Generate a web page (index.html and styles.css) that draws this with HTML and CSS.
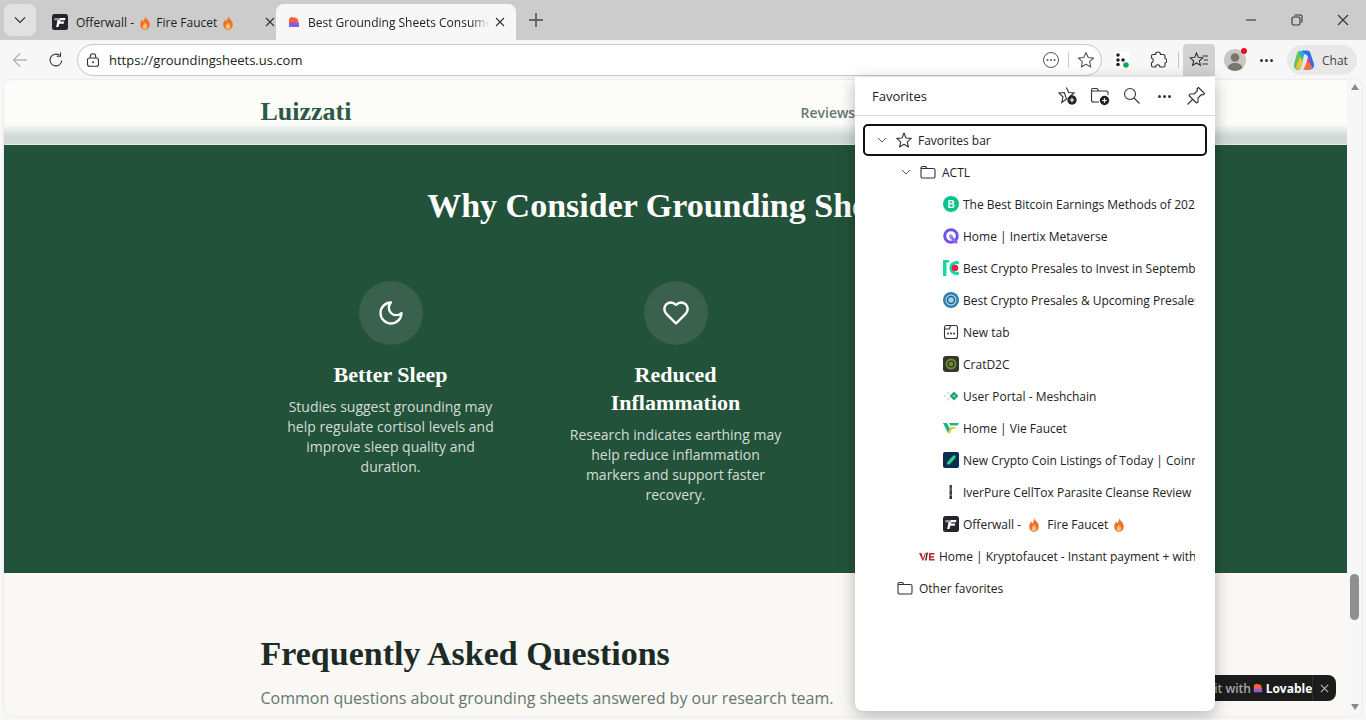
FILE: index.html
```html
<!DOCTYPE html>
<html lang="en">
<head>
  <meta charset="UTF-8" />
  <title>Best Grounding Sheets Consumer Reviews</title>
  <link rel="stylesheet" href="styles.css">
</head>
<body>

  <div class="tab-strip">
    <button class="tab-search">
      <svg width="14" height="14" viewBox="0 0 14 14"><path d="M2 4.5 7 9.5 12 4.5" class="line"/></svg>
    </button>
    <div class="tab">
      <svg class="favicon" viewBox="0 0 16 16"><rect width="16" height="16" rx="2.5" fill="#23252b"/><path d="M3 4h10.500l-.6 2.300H8.300L7.900 7.600h4.300l-.5 2.200H7.300L6.500 13H4.200L5.500 6.300H2.700z" fill="#fff"/><path d="M2.500 4H8L7.600 6H2.200z" fill="#9a958c"/></svg>
      <span class="tab-title">Offerwall - <svg class="flame" viewBox="0 0 12 14"><path d="M6 0c.5 2.500 4.800 4.300 4.800 8.400A4.800 5.300 0 0 1 1.200 8.400C1.200 6.200 2.600 5 3.300 3.600c.6.800.8 1.300 1 2C5.300 4.200 6.300 2.200 6 0z" fill="#f0702c"/><path d="M6 6.500c.3 1.200 2.300 2 2.300 3.900a2.300 2.600 0 0 1-4.600 0C3.700 8.800 5.600 8 6 6.500z" fill="#fbc16b"/></svg> Fire Faucet <svg class="flame" viewBox="0 0 12 14"><path d="M6 0c.5 2.500 4.800 4.300 4.800 8.400A4.800 5.300 0 0 1 1.200 8.400C1.200 6.200 2.600 5 3.300 3.600c.6.800.8 1.300 1 2C5.300 4.200 6.300 2.200 6 0z" fill="#f0702c"/><path d="M6 6.500c.3 1.200 2.300 2 2.300 3.900a2.300 2.600 0 0 1-4.600 0C3.700 8.800 5.600 8 6 6.500z" fill="#fbc16b"/></svg></span>
      <svg class="tab-close" viewBox="0 0 10 10"><path d="M1 1 9 9M9 1 1 9" class="line"/></svg>
    </div>
    <div class="tab tab-active">
      <svg class="favicon lovable-mark" viewBox="0 0 12 12"><path d="M1 4a3 3 0 0 1 5-2.300A3 3 0 0 1 10 4l1 4H1z" fill="#f5613b"/><path d="M1 7c3-1.200 6-.6 10 .6V11H1z" fill="#8a5be8"/></svg>
      <span class="tab-title tab-title-fade">Best Grounding Sheets Consumer Reviews</span>
      <svg class="tab-close" viewBox="0 0 10 10"><path d="M1 1 9 9M9 1 1 9" class="line"/></svg>
    </div>
    <svg class="new-tab" width="16" height="16" viewBox="0 0 16 16"><path d="M8 1v14M1 8h14" stroke="#444" stroke-width="1.400" fill="none"/></svg>
    <div class="window-controls">
      <svg width="12" height="12" viewBox="0 0 12 12"><path d="M1 6h10" class="line"/></svg>
      <svg width="12" height="12" viewBox="0 0 12 12"><rect x="1" y="3" width="8" height="8" rx="1.500" class="line"/><path d="M3.500 1H9.500A1.500 1.500 0 0 1 11 2.500V8.500" class="line"/></svg>
      <svg width="12" height="12" viewBox="0 0 12 12"><path d="M1 1 11 11M11 1 1 11" class="line"/></svg>
    </div>
  </div>

  <div class="toolbar">
    <svg class="tool-icon back" viewBox="0 0 18 18"><path d="M16 9H2.500M9 2.500 2.500 9 9 15.500" fill="none" stroke="#b4b4b4" stroke-width="1.300"/></svg>
    <svg class="tool-icon reload" viewBox="0 0 18 18"><path d="M14.800 9.500A5.900 5.900 0 1 1 12.500 4.300" class="line"/><path d="M13.500 1.500v3.800H9.700" class="line"/></svg>
    <div class="address-bar">
      <svg class="lock" viewBox="0 0 14 14"><rect x="1.500" y="5" width="11" height="8.300" rx="2" class="line"/><path d="M4.300 5V3.500a2.700 2.700 0 0 1 5.400 0V5" class="line"/><circle cx="7" cy="9.200" r="1" fill="#333"/></svg>
      <span class="url">https://groundingsheets.us.com</span>
      <svg class="addr-icon" viewBox="0 0 18 18"><circle cx="9" cy="9" r="7.500" fill="none" stroke="#555" stroke-width="1"/><circle cx="5.500" cy="9" r="1" fill="#555"/><circle cx="9" cy="9" r="1" fill="#555"/><circle cx="12.500" cy="9" r="1" fill="#555"/></svg>
      <span class="addr-sep"></span>
      <svg class="addr-icon" viewBox="0 0 18 18"><path d="M9 1.500 11.200 6.500 16.600 7.100 12.600 10.700 13.700 16 9 13.300 4.300 16 5.400 10.700 1.400 7.100 6.800 6.500z" fill="none" stroke="#555" stroke-width="1.100" stroke-linejoin="round"/></svg>
    </div>
    <div class="ext-icon">
      <svg width="16" height="16" viewBox="0 0 16 16"><rect width="16" height="16" fill="#fff"/><circle cx="4" cy="3" r="1.800" fill="#222"/><circle cx="4" cy="8" r="1.800" fill="#222"/><circle cx="4" cy="12.500" r="1.800" fill="#222"/><circle cx="9" cy="8" r="1.800" fill="#222"/><circle cx="12" cy="13" r="2.800" fill="#12a84f"/></svg>
    </div>
    <div class="ext-icon">
      <svg width="18" height="18" viewBox="0 0 18 18"><path d="M6.500 3.500a2.500 2.500 0 0 1 5 0h3a1.500 1.500 0 0 1 1.500 1.500v2.500a2.300 2.300 0 0 1 0 4.500v2.500a1.500 1.500 0 0 1-1.500 1.500H11a2.200 2.200 0 0 0-4.400 0H4A1.500 1.500 0 0 1 2.500 14.500V11.800a2.500 2.500 0 0 0 0-4.800V5A1.500 1.500 0 0 1 4 3.500z" class="line"/></svg>
    </div>
    <span class="tool-sep"></span>
    <div class="ext-icon fav-active">
      <svg width="20" height="18" viewBox="0 0 20 18"><path d="M7.500 2 9.300 6.300 13.800 6.800 10.400 9.800 11.400 14.300 7.500 12 3.600 14.300 4.600 9.800 1.200 6.800 5.700 6.300z" class="line"/><path d="M13.500 5H19M14.800 9H19M13 13H19" class="line"/></svg>
    </div>
    <div class="avatar">
      <svg width="22" height="22" viewBox="0 0 22 22"><circle cx="11" cy="11" r="11" fill="#c9c6c3"/><circle cx="11" cy="8.500" r="4.300" fill="#7b7570"/><path d="M3.500 19c1-3.600 3.500-5 7.500-5s6.500 1.400 7.500 5a11 11 0 0 1-15 0z" fill="#7b7570"/></svg>
      <span class="avatar-dot"></span>
    </div>
    <div class="ext-icon dots"><span></span><span></span><span></span></div>
    <div class="chat-pill">
      <svg width="22" height="22" viewBox="0 0 22 22">
        <path d="M7 2h5l-4 16.500C7.600 20 6.500 20.500 5 20.500H4.500C2 20.500.5 18 1.200 15.500L4 5C4.500 3 5.500 2 7 2z" fill="#27b0d8"/>
        <path d="M1.300 15 4 5c.3-1 1-2 2-2.500L9 11l-3 9.500c-3 .5-5.500-2.500-4.700-5.500z" fill="#6cc24a"/>
        <path d="M3 18 7 8l3 5-3 7c-2 .5-3.500-.5-4-2z" fill="#f4c430"/>
        <path d="M9 1.500h5c2 0 3 1 3.500 3L21 15c.5 2.500-1 5.500-4 5.500h-5l3-11c.5-2-1-4-3-4z" fill="#2f6bed"/>
        <path d="M15 8c.8 2 2 4 3 6l-1 6.500h-6l3-8z" fill="#e8408a"/>
        <path d="M10 20.500h6c1.500 0 3-1 3.500-2.500L15 13z" fill="#f2763a"/>
      </svg>
      <span>Chat</span>
    </div>
  </div>

  <div class="viewport">
    <div class="page">
      <header class="site-header">
        <div class="site-header-inner">
          <span class="brand">Luizzati</span>
          <nav class="site-nav"><span>Reviews</span></nav>
        </div>
      </header>

      <section class="why">
        <h2>Why Consider Grounding Sheets?</h2>
        <div class="why-grid">
          <div class="why-card">
            <div class="why-icon">
              <svg width="28" height="28" viewBox="0 0 24 24"><path d="M12 3a6 6 0 0 0 9 9 9 9 0 1 1-9-9z" fill="none" stroke="#fff" stroke-width="2" stroke-linejoin="round" stroke-linecap="round"/></svg>
            </div>
            <h3>Better Sleep</h3>
            <p>Studies suggest grounding may help regulate cortisol levels and improve sleep quality and duration.</p>
          </div>
          <div class="why-card">
            <div class="why-icon">
              <svg width="28" height="28" viewBox="0 0 24 24"><path d="M19 14c1.490-1.460 3-3.210 3-5.500A5.500 5.500 0 0 0 16.500 3c-1.760 0-3 .5-4.500 2-1.500-1.500-2.740-2-4.500-2A5.500 5.500 0 0 0 2 8.500c0 2.300 1.500 4.050 3 5.500l7 7z" fill="none" stroke="#fff" stroke-width="2" stroke-linejoin="round" stroke-linecap="round"/></svg>
            </div>
            <h3>Reduced Inflammation</h3>
            <p>Research indicates earthing may help reduce inflammation markers and support faster recovery.</p>
          </div>
          <div class="why-card"></div>
        </div>
      </section>

      <section class="faq">
        <h2>Frequently Asked Questions</h2>
        <p>Common questions about grounding sheets answered by our research team.</p>
      </section>
    </div>

    <div class="page-scrollbar">
      <span class="arrow-up"></span>
      <span class="thumb"></span>
      <span class="arrow-down"></span>
    </div>

    <div class="lovable-badge">
      <span class="edit-with">Edit with</span>
      <svg class="lovable-mark-sm" viewBox="0 0 12 12"><path d="M1 4a3 3 0 0 1 5-2.300A3 3 0 0 1 10 4l1 4H1z" fill="#f5613b"/><path d="M1 7.500c3-1.200 6-.6 10 .6V11H1z" fill="#8a5be8"/></svg>
      <span class="lovable-name">Lovable</span>
      <span class="badge-close"><svg width="9" height="9" viewBox="0 0 10 10"><path d="M1 1 9 9M9 1 1 9" fill="none" stroke="#bbb" stroke-width="1.200"/></svg></span>
    </div>
  </div>

  <aside class="fav-panel">
    <div class="fav-head">
      <span class="fav-title">Favorites</span>
      <svg class="head-icon" viewBox="0 0 20 20"><path d="M8.500 1.500 10.700 6.500 16 7 12 10.500M8.500 13 3.800 16.500 5 11 1 7 6.300 6.500z" class="line"/><circle cx="14" cy="14" r="4.700" fill="#222"/><path d="M14 11.700v4.600M11.700 14h4.600" stroke="#fff" stroke-width="1.200"/></svg>
      <svg class="head-icon" viewBox="0 0 20 20"><path d="M9 16H3.500A2 2 0 0 1 1.500 14V4A1.500 1.500 0 0 1 3 2.500h4L9 5h7.500A1.500 1.500 0 0 1 18 6.500V9M1.500 5H9" class="line"/><circle cx="14.500" cy="14.500" r="4.700" fill="#222"/><path d="M14.500 12.200v4.600M12.200 14.500h4.600" stroke="#fff" stroke-width="1.200"/></svg>
      <svg class="head-icon" viewBox="0 0 20 20"><circle cx="8" cy="8" r="5.500" class="line"/><path d="M12 12 17.500 17.500" class="line"/></svg>
      <div class="head-icon dots"><span></span><span></span><span></span></div>
      <svg class="head-icon" viewBox="0 0 20 20"><path d="M12.500 1.500 18.500 7.500 17 9 15.500 8.500 12 12 12 16 10.500 17 3 9.500 4 8 8 8 11.500 4.500 11 3z" class="line" stroke-linejoin="round"/><path d="M6.500 13.500 1.500 18.500" class="line"/></svg>
    </div>

    <div class="fav-list">
      <div class="fav-row fav-row-focus">
        <svg class="chev" viewBox="0 0 10 10"><path d="M1 3 5 7 9 3" class="line-soft"/></svg>
        <svg class="row-icon" viewBox="0 0 16 16"><path d="M8 1 10 6 15.300 6.400 11.200 9.800 12.500 15 8 12.200 3.500 15 4.800 9.800.7 6.400 6 6z" class="line" stroke-linejoin="round"/></svg>
        <span class="fav-label">Favorites bar</span>
      </div>
      <div class="fav-row depth-1">
        <svg class="chev" viewBox="0 0 10 10"><path d="M1 3 5 7 9 3" class="line-soft"/></svg>
        <svg class="row-icon" viewBox="0 0 16 16"><path d="M1 4.500V4A1.500 1.500 0 0 1 2.500 2.500h3L7 4.500h6.500A1.500 1.500 0 0 1 15 6v6.500A1.500 1.500 0 0 1 13.500 14h-11A1.500 1.500 0 0 1 1 12.500zM1 4.500h6" class="line"/></svg>
        <span class="fav-label">ACTL</span>
      </div>

      <div class="fav-row depth-2">
        <svg class="row-icon" viewBox="0 0 16 16"><circle cx="8" cy="8" r="8" fill="#0ac18e"/><text x="8" y="11.500" class="bitcoin-b">B</text></svg>
        <span class="fav-label">The Best Bitcoin Earnings Methods of 2024</span>
      </div>
      <div class="fav-row depth-2">
        <svg class="row-icon" viewBox="0 0 16 16"><circle cx="8" cy="8" r="6.300" fill="none" stroke="#6b55e8" stroke-width="3"/><path d="M7 8 14 15" stroke="#a35cf0" stroke-width="3"/><circle cx="8" cy="8" r="1.800" fill="#6aa0f5"/></svg>
        <span class="fav-label">Home | Inertix Metaverse</span>
      </div>
      <div class="fav-row depth-2">
        <svg class="row-icon" viewBox="0 0 16 16"><path d="M0 0h6v2.500H3.500V16H0z" fill="#14d9a0"/><path d="M16 1.500A7 7 0 1 0 16 14.500V11.500A4 4 0 1 1 16 4.500z" fill="#14d9a0"/><circle cx="12" cy="8" r="3.300" fill="#f01f4c"/></svg>
        <span class="fav-label">Best Crypto Presales to Invest in September</span>
      </div>
      <div class="fav-row depth-2">
        <svg class="row-icon" viewBox="0 0 16 16"><circle cx="8" cy="8" r="8" fill="#2f7fb0"/><circle cx="8" cy="8" r="5.500" fill="#a9d2e6"/><circle cx="8" cy="8" r="3.500" fill="none" stroke="#1f5f8c" stroke-width="1.500"/></svg>
        <span class="fav-label">Best Crypto Presales &amp; Upcoming Presales T</span>
      </div>
      <div class="fav-row depth-2">
        <svg class="row-icon" viewBox="0 0 16 16"><rect x="1.500" y="1.500" width="13" height="13" rx="2" class="line"/><path d="M1.500 5h5l1-3.500" class="line"/><circle cx="5" cy="9.500" r=".9" fill="#222"/><circle cx="8" cy="9.500" r=".9" fill="#222"/><circle cx="11" cy="9.500" r=".9" fill="#222"/></svg>
        <span class="fav-label">New tab</span>
      </div>
      <div class="fav-row depth-2">
        <svg class="row-icon" viewBox="0 0 16 16"><rect width="16" height="16" rx="3" fill="#33362a"/><circle cx="8" cy="8" r="5.500" fill="#6d8a3a"/><circle cx="8" cy="8" r="3" fill="none" stroke="#2c3320" stroke-width="1.200"/></svg>
        <span class="fav-label">CratD2C</span>
      </div>
      <div class="fav-row depth-2">
        <svg class="row-icon" viewBox="0 0 16 16"><rect x="1" y="7" width="2" height="2" fill="#dde4e2"/><rect x="4" y="4" width="2.500" height="2.500" fill="#dde4e2"/><rect x="4" y="10" width="2.500" height="2.500" fill="#dde4e2"/><path d="M11 3.500 15.500 8 11 12.500 6.500 8z" fill="#1fa67a"/><path d="M11 7 12 8 11 9 10 8z" fill="#fff"/></svg>
        <span class="fav-label">User Portal - Meshchain</span>
      </div>
      <div class="fav-row depth-2">
        <svg class="row-icon" viewBox="0 0 16 16"><path d="M0 3h4l3 6-2 4z" fill="#1fb57a"/><path d="M6 3h10l-1.500 2.500H7.500z" fill="#1fb57a"/><path d="M7.500 7h5.500l-1.500 2H9L6.500 14 5 13z" fill="#f4c430"/></svg>
        <span class="fav-label">Home | Vie Faucet</span>
      </div>
      <div class="fav-row depth-2">
        <svg class="row-icon" viewBox="0 0 16 16"><rect width="16" height="16" rx="2" fill="#0c2d52"/><path d="M4 10.500 10 3.500h2.500V6L6.500 12.500H4z" fill="#1fd48a"/></svg>
        <span class="fav-label">New Crypto Coin Listings of Today | Coinranking</span>
      </div>
      <div class="fav-row depth-2">
        <svg class="row-icon" viewBox="0 0 16 16"><rect x="6.500" y="1" width="2.500" height="3" fill="#7a3040"/><rect x="6.500" y="4" width="2.500" height="3" fill="#3a6a7a"/><rect x="6.500" y="7" width="2.500" height="3" fill="#6a2a3a"/><rect x="6.500" y="10" width="2.500" height="2" fill="#4a7a5a"/><rect x="6.500" y="12" width="2.500" height="3" fill="#333"/></svg>
        <span class="fav-label">IverPure CellTox Parasite Cleanse Review [LEGIT]</span>
      </div>
      <div class="fav-row depth-2">
        <svg class="row-icon" viewBox="0 0 16 16"><rect width="16" height="16" rx="2.500" fill="#23252b"/><path d="M3 4h10.500l-.6 2.300H8.300L7.900 7.600h4.300l-.5 2.200H7.300L6.500 13H4.200L5.500 6.300H2.700z" fill="#fff"/><path d="M2.500 4H8L7.600 6H2.200z" fill="#9a958c"/></svg>
        <span class="fav-label">Offerwall - <svg class="flame flame-gap" viewBox="0 0 12 14"><path d="M6 0c.5 2.500 4.800 4.300 4.800 8.400A4.800 5.300 0 0 1 1.200 8.400C1.200 6.200 2.600 5 3.300 3.600c.6.800.8 1.300 1 2C5.300 4.200 6.300 2.200 6 0z" fill="#f0702c"/><path d="M6 6.500c.3 1.200 2.300 2 2.300 3.900a2.300 2.600 0 0 1-4.600 0C3.700 8.800 5.600 8 6 6.500z" fill="#fbc16b"/></svg> Fire Faucet <svg class="flame" viewBox="0 0 12 14"><path d="M6 0c.5 2.500 4.800 4.300 4.800 8.400A4.800 5.300 0 0 1 1.200 8.400C1.200 6.200 2.600 5 3.300 3.600c.6.800.8 1.300 1 2C5.300 4.200 6.300 2.200 6 0z" fill="#f0702c"/><path d="M6 6.500c.3 1.200 2.300 2 2.300 3.900a2.300 2.600 0 0 1-4.600 0C3.700 8.800 5.600 8 6 6.500z" fill="#fbc16b"/></svg></span>
      </div>
      <div class="fav-row depth-1b">
        <svg class="row-icon" viewBox="0 0 16 16"><path d="M0 5h2.500L4 10.500 6 5h1l-2.500 7.500h-1z" fill="#c8232c"/><path d="M7.500 4.500h1.500L7.500 12.500H6z" fill="#333"/><path d="M10 5h5.500v1.600h-3.800v1.600h3.300v1.500h-3.300v1.200h3.800v1.600H10z" fill="#c8232c"/></svg>
        <span class="fav-label">Home | Kryptofaucet - Instant payment + withdrawals</span>
      </div>
      <div class="fav-row depth-0b">
        <svg class="row-icon" viewBox="0 0 16 16"><path d="M1 4.500V4A1.500 1.500 0 0 1 2.500 2.500h3L7 4.500h6.500A1.500 1.500 0 0 1 15 6v6.500A1.500 1.500 0 0 1 13.500 14h-11A1.500 1.500 0 0 1 1 12.500zM1 4.500h6" class="line"/></svg>
        <span class="fav-label">Other favorites</span>
      </div>
    </div>
  </aside>

</body>
</html>
```

FILE: styles.css
```css
* {
  box-sizing: border-box;
}

html, body {
  height: 720px;
  overflow: hidden;
}

body {
  margin: 0;
  position: relative;
  background: #f7f7f7;
  font-family: 'Open Sans', 'Noto Sans', sans-serif;
  color: #222;
}

svg {
  display: block;
  flex: none;
}

.line {
  fill: none;
  stroke: #333;
  stroke-width: 1.1;
}

.line-soft {
  fill: none;
  stroke: #555;
  stroke-width: 1;
}

/* tab strip */
.tab-strip {
  height: 40px;
  background: #cccccc;
  display: flex;
  align-items: flex-end;
  padding-left: 4px;
}

.tab-search {
  width: 32px;
  height: 32px;
  margin: 0 8px 4px 0;
  border: none;
  border-radius: 8px;
  background: #e1e1e1;
  display: flex;
  align-items: center;
  justify-content: center;
  padding: 0;
}

.tab {
  width: 233px;
  height: 36px;
  display: flex;
  align-items: center;
  padding: 0 2px 0 8px;
  font-size: 12px;
}

.tab-active {
  width: 240px;
  margin-left: -1px;
  padding: 0 11px 0 12px;
  background: #f7f7f7;
  border-radius: 8px 8px 0 0;
}

.favicon {
  width: 16px;
  height: 16px;
  margin-right: 8px;
}

.lovable-mark {
  width: 12px;
  height: 12px;
  margin: 0 8px 0 0;
  margin-right: 8px;
}

.tab-title {
  flex: 1;
  white-space: nowrap;
  overflow: hidden;
}

.tab-title-fade {
  -webkit-mask-image: linear-gradient(to right, #000 90%, transparent);
  mask-image: linear-gradient(to right, #000 90%, transparent);
}

.flame {
  display: inline-block;
  width: 12px;
  height: 14px;
  vertical-align: -3px;
  margin: 0 2px;
}

.flame-gap {
  margin: 0 4px;
}

.tab-close {
  width: 10px;
  height: 10px;
  margin-left: 6px;
}

.new-tab {
  margin: 0 0 12px 12px;
}

.window-controls {
  margin-left: auto;
  height: 40px;
  display: flex;
  align-items: center;
  gap: 34px;
  padding-right: 17px;
}

/* toolbar */
.toolbar {
  height: 40px;
  display: flex;
  align-items: center;
  background: #f7f7f7;
  padding-left: 11px;
}

.tool-icon {
  width: 18px;
  height: 18px;
}

.reload {
  margin-left: 18px;
}

.address-bar {
  width: 1025px;
  height: 32px;
  margin-left: 12px;
  display: flex;
  align-items: center;
  background: #fff;
  border: 1px solid #c8c8c8;
  border-radius: 16px;
  padding: 0 6px 0 8px;
}

.lock {
  width: 14px;
  height: 14px;
}

.url {
  flex: 1;
  margin-left: 9px;
  font-size: 13px;
  color: #222;
}

.addr-icon {
  width: 18px;
  height: 18px;
}

.addr-sep {
  width: 1px;
  height: 16px;
  background: #ccc;
  margin: 0 8px;
}

.ext-icon {
  width: 32px;
  height: 32px;
  display: flex;
  align-items: center;
  justify-content: center;
  margin-left: 4px;
}

.tool-sep {
  width: 1px;
  height: 16px;
  background: #c4c4c4;
  margin: 0 4px 0 4px;
}

.fav-active {
  background: #d2d2d2;
  border-radius: 4px 4px 0 0;
  margin-left: 0;
}

.avatar {
  position: relative;
  width: 22px;
  height: 22px;
  margin-left: 9px;
}

.avatar-dot {
  position: absolute;
  top: -1px;
  right: -1px;
  width: 6px;
  height: 6px;
  border-radius: 50%;
  background: #e81123;
}

.dots {
  display: flex;
  align-items: center;
  justify-content: center;
  gap: 2px;
}

.dots span {
  width: 3px;
  height: 3px;
  border-radius: 50%;
  background: #333;
}

.chat-pill {
  width: 70px;
  height: 30px;
  margin-left: 5px;
  border-radius: 15px;
  background: #e8e8e8;
  display: flex;
  align-items: center;
  padding-left: 6px;
  gap: 7px;
  font-size: 12px;
  color: #444;
}

/* page */
.viewport {
  position: relative;
  height: 636px;
  margin: 0 4px;
  display: flex;
  background: #f9f8f5;
  border-radius: 8px;
  overflow: hidden;
  box-shadow: 0 0 2px rgba(0, 0, 0, 0.15);
}

.page {
  width: 1343px;
  flex: none;
  overflow: hidden;
}

.site-header {
  height: 65px;
  background: linear-gradient(#fcfdfb 0, #fcfdfb 44px, #d0d9d5 56px, #d0d9d5 64px, #e8e8e2 64px);
}

.site-header-inner {
  width: 830px;
  margin: 0 auto;
  padding-top: 16px;
  display: flex;
  justify-content: space-between;
  align-items: center;
}

.brand {
  font-family: 'Liberation Serif', serif;
  font-weight: bold;
  font-size: 26px;
  line-height: 32px;
  color: #2d5a45;
}

.site-nav {
  width: 290px;
  font-size: 14px;
  font-weight: 600;
  color: #66786f;
}

.why {
  background: #23523a;
  height: 428px;
  padding-top: 41px;
  color: #fff;
}

.why h2 {
  margin: 0;
  font-family: 'Liberation Serif', serif;
  font-size: 34px;
  line-height: 40px;
  text-align: center;
}

.why-grid {
  width: 830px;
  margin: 55px auto 0;
  display: grid;
  grid-template-columns: repeat(3, 260px);
  gap: 25px;
}

.why-card {
  padding: 0 24px;
  text-align: center;
}

.why-icon {
  width: 64px;
  height: 64px;
  margin: 0 auto 16px;
  border-radius: 50%;
  background: #3a604e;
  display: flex;
  align-items: center;
  justify-content: center;
}

.why-card h3 {
  margin: 0 0 8px;
  font-family: 'Liberation Serif', serif;
  font-size: 22px;
  line-height: 28px;
}

.why-card p {
  margin: 0;
  font-size: 14px;
  line-height: 20px;
  color: #d3dcd8;
}

.faq {
  width: 830px;
  margin: 0 auto;
  padding-top: 61px;
}

.faq h2 {
  margin: 0;
  font-family: 'Liberation Serif', serif;
  font-size: 34px;
  line-height: 40px;
  color: #1d2b26;
}

.faq p {
  margin: 12px 0 0;
  font-size: 16px;
  line-height: 24px;
  color: #66766e;
}

/* scrollbar */
.page-scrollbar {
  position: relative;
  flex: 1;
  background: #f7f7f7;
}

.arrow-up,
.arrow-down {
  position: absolute;
  left: 4px;
  width: 0;
  height: 0;
  border-left: 4px solid transparent;
  border-right: 4px solid transparent;
}

.arrow-up {
  top: 4px;
  border-bottom: 6px solid #8a8a8a;
}

.arrow-down {
  bottom: 6px;
  border-top: 6px solid #8a8a8a;
}

.thumb {
  position: absolute;
  top: 494px;
  left: 3px;
  width: 9px;
  height: 46px;
  border-radius: 5px;
  background: #8f8f8f;
}

/* lovable badge, sits over the page */
.lovable-badge {
  position: absolute;
  right: 26px;
  bottom: 15px;
  height: 26px;
  width: 150px;
  padding-left: 14px;
  display: flex;
  align-items: center;
  background: #1c1c1c;
  border-radius: 8px;
  font-size: 12px;
  color: #a9a9a9;
}

.edit-with {
  width: 58px;
  font-weight: 600;
}

.lovable-mark-sm {
  width: 10px;
  height: 10px;
  margin-right: 3px;
}

.lovable-name {
  color: #fff;
  font-weight: 700;
}

.badge-close {
  margin-left: auto;
  width: 26px;
  height: 26px;
  border-left: 1px solid #2e2e2e;
  display: flex;
  align-items: center;
  justify-content: center;
}

/* favorites flyout */
.fav-panel {
  position: absolute;
  top: 77px;
  left: 855px;
  width: 360px;
  height: 634px;
  background: #fff;
  border-radius: 0 0 8px 8px;
  box-shadow: 0 4px 16px rgba(0, 0, 0, 0.28);
}

.fav-head {
  height: 39px;
  display: flex;
  align-items: center;
  padding: 0 9px 0 17px;
  border-bottom: 1px solid #d8d8d8;
  gap: 12px;
}

.fav-title {
  flex: 1;
  font-size: 13px;
}

.head-icon {
  width: 20px;
  height: 20px;
}

.fav-list {
  padding: 8px 8px 0;
}

.fav-row {
  height: 32px;
  display: flex;
  align-items: center;
  padding-right: 12px;
  font-size: 12px;
}

.fav-row-focus {
  border: 2px solid #111;
  border-radius: 5px;
  padding-left: 12px;
}

.depth-1 {
  padding-left: 38px;
}

.depth-2 {
  padding-left: 80px;
}

.depth-1b {
  padding-left: 56px;
}

.depth-0b {
  padding-left: 34px;
}

.chev {
  width: 10px;
  height: 10px;
  margin-right: 9px;
}

.row-icon {
  width: 16px;
  height: 16px;
  margin-right: 4px;
}

.depth-1 .row-icon,
.fav-row-focus .row-icon,
.depth-0b .row-icon {
  margin-right: 6px;
}

.fav-label {
  flex: 1;
  min-width: 0;
  white-space: nowrap;
  overflow: hidden;
}

.bitcoin-b {
  font-family: 'Liberation Sans', sans-serif;
  font-size: 10px;
  font-weight: bold;
  fill: #fff;
  text-anchor: middle;
}
```
